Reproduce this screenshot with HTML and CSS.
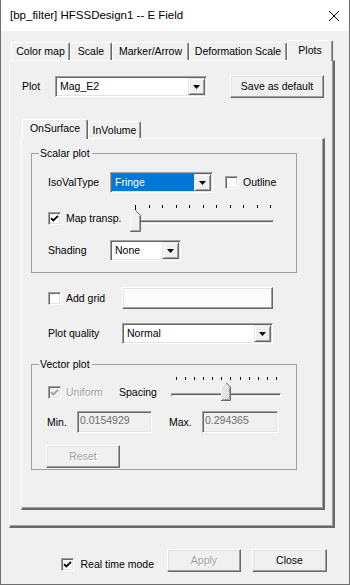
FILE: index.html
```html
<!DOCTYPE html>
<html lang="en">
<head>
    <meta charset="UTF-8">
    <meta name="viewport" content="width=device-width, initial-scale=1.0">
    <title>E Field</title>
    <link rel="stylesheet" href="styles.css">
</head>
<body>
<div class="window">
    <div class="titlebar">
        <span class="title">[bp_filter] HFSSDesign1 -- E Field</span>
        <svg class="close" width="10" height="10" viewBox="0 0 10 10"><path d="M0 0L10 10M10 0L0 10" stroke="#000" stroke-width="1"/></svg>
    </div>
    <div class="client">
        <div class="tabs">
            <div class="tab w-color">Color map</div>
            <div class="tab w-scale">Scale</div>
            <div class="tab w-marker">Marker/Arrow</div>
            <div class="tab w-deform">Deformation Scale</div>
            <div class="tab active w-plots">Plots</div>
        </div>
        <div class="panel">
            <div class="plot-row">
                <span class="plot-label">Plot</span>
                <div class="combo combo-plot">
                    <span class="combo-value">Mag_E2</span>
                    <span class="drop"><svg width="7" height="4" viewBox="0 0 7 4"><path d="M0 0H7L3.5 4Z" fill="#000"/></svg></span>
                </div>
                <button class="btn btn-default">Save as default</button>
            </div>

            <div class="tabs sub-tabs">
                <div class="tab active w-onsurface">OnSurface</div>
                <div class="tab w-involume">InVolume</div>
            </div>
            <div class="panel sub-panel">
                <fieldset class="group group-scalar">
                    <legend>Scalar plot</legend>
                    <div class="row row-iso">
                        <span class="field-label">IsoValType</span>
                        <div class="combo combo-iso">
                            <span class="combo-value selected">Fringe</span>
                            <span class="drop"><svg width="7" height="4" viewBox="0 0 7 4"><path d="M0 0H7L3.5 4Z" fill="#000"/></svg></span>
                        </div>
                        <label class="check outline-check"><span class="box"></span>Outline</label>
                    </div>
                    <div class="row row-transp">
                        <label class="check transp-check">
                            <span class="box"><svg width="9" height="9" viewBox="0 0 9 9"><path d="M1 4.2L3.3 6.5L8 1.8" fill="none" stroke="#000" stroke-width="1.8"/></svg></span>Map transp.
                        </label>
                        <div class="slider slider-transp">
                            <div class="ticks">
                                <i class="tick long"></i><i class="tick"></i><i class="tick"></i><i class="tick"></i>
                                <i class="tick"></i><i class="tick"></i><i class="tick"></i><i class="tick"></i>
                                <i class="tick"></i><i class="tick"></i><i class="tick"></i>
                            </div>
                            <div class="track"></div>
                            <svg class="thumb" width="11" height="22" viewBox="0 0 11 22">
                                <path d="M0.5 5.5L5.5 0.5L10.5 5.5V21.5H0.5Z" fill="#f0f0f0"/>
                                <path d="M0.5 21V5.5L5.2 0.8" fill="none" stroke="#fff"/>
                                <path d="M5.8 0.8L10.5 5.5V21.5H0" fill="none" stroke="#696969"/>
                                <path d="M9.5 6V20.5H1" fill="none" stroke="#a0a0a0"/>
                            </svg>
                        </div>
                    </div>
                    <div class="row row-shading">
                        <span class="field-label">Shading</span>
                        <div class="combo combo-shading">
                            <span class="combo-value">None</span>
                            <span class="drop"><svg width="7" height="4" viewBox="0 0 7 4"><path d="M0 0H7L3.5 4Z" fill="#000"/></svg></span>
                        </div>
                    </div>
                </fieldset>

                <div class="opt-grid">
                    <label class="check"><span class="box"></span>Add grid</label>
                    <button class="btn btn-color"></button>
                    <span>Plot quality</span>
                    <div class="combo combo-quality">
                        <span class="combo-value">Normal</span>
                        <span class="drop"><svg width="7" height="4" viewBox="0 0 7 4"><path d="M0 0H7L3.5 4Z" fill="#000"/></svg></span>
                    </div>
                </div>

                <fieldset class="group group-vector">
                    <legend>Vector plot</legend>
                    <div class="row row-spacing">
                        <label class="check disabled uniform-check">
                            <span class="box"><svg width="9" height="9" viewBox="0 0 9 9"><path d="M1 4.2L3.3 6.5L8 1.8" fill="none" stroke="#a0a0a0" stroke-width="1.8"/></svg></span>Uniform
                        </label>
                        <span class="spacing-label">Spacing</span>
                        <div class="slider slider-spacing">
                            <div class="ticks">
                                <i class="tick"></i><i class="tick"></i><i class="tick"></i><i class="tick"></i>
                                <i class="tick"></i><i class="tick"></i><i class="tick"></i><i class="tick"></i>
                                <i class="tick"></i><i class="tick"></i><i class="tick"></i><i class="tick"></i>
                            </div>
                            <div class="track"></div>
                            <svg class="thumb" width="10" height="19" viewBox="0 0 10 19">
                                <defs>
                                    <pattern id="dither" width="2" height="2" patternUnits="userSpaceOnUse">
                                        <rect width="2" height="2" fill="#fff"/>
                                        <rect width="1" height="1" fill="#c8c8c8"/>
                                        <rect x="1" y="1" width="1" height="1" fill="#c8c8c8"/>
                                    </pattern>
                                </defs>
                                <path d="M0.5 5L5 0.5L9.5 5V18.5H0.5Z" fill="url(#dither)"/>
                                <path d="M0.5 18V5L4.7 0.8" fill="none" stroke="#fff"/>
                                <path d="M5.3 0.8L9.5 5V18.5H0" fill="none" stroke="#696969"/>
                                <path d="M8.5 5.5V17.5H1" fill="none" stroke="#a0a0a0"/>
                            </svg>
                        </div>
                    </div>
                    <div class="row row-range">
                        <span class="min-label">Min.</span>
                        <div class="edit edit-min">0.0154929</div>
                        <span class="max-label">Max.</span>
                        <div class="edit edit-max">0.294365</div>
                    </div>
                    <div class="row row-reset">
                        <button class="btn disabled btn-reset">Reset</button>
                    </div>
                </fieldset>
            </div>
        </div>

        <div class="footer">
            <label class="check realtime-check">
                <span class="box"><svg width="9" height="9" viewBox="0 0 9 9"><path d="M1 4.2L3.3 6.5L8 1.8" fill="none" stroke="#000" stroke-width="1.8"/></svg></span>Real time mode
            </label>
            <button class="btn disabled btn-apply">Apply</button>
            <button class="btn btn-close">Close</button>
        </div>
    </div>
</div>
</body>
</html>
```

FILE: styles.css
```css
* {
    box-sizing: border-box;
}
html, body {
    margin: 0;
    padding: 0;
}
body {
    background: #f0f0f0;
    font-family: "Liberation Sans", Arial, sans-serif;
    font-size: 10.5px;
    line-height: 13px;
    color: #000;
}

/* window frame */
.window {
    width: 350px;
    height: 585px;
    display: flex;
    flex-direction: column;
    background: #f0f0f0;
    border: 1px solid #6e6e6e;
    border-top: none;
}
.titlebar {
    flex: none;
    height: 31px;
    background: #fff;
    display: flex;
    align-items: center;
    justify-content: space-between;
    padding: 0 10px 0 9px;
}
.title {
    font-size: 11.5px;
}
.client {
    flex: 1;
    display: flex;
    flex-direction: column;
    padding: 9px 14px 0 8px;
}

/* tabs */
.tabs {
    display: flex;
    align-items: flex-end;
    padding-left: 2px;
}
.tab {
    height: 18px;
    display: flex;
    align-items: center;
    justify-content: center;
    border: 1px solid;
    border-color: #fff #696969 transparent #fff;
    border-bottom: none;
    border-radius: 2px 2px 0 0;
    box-shadow: inset -1px 0 #a0a0a0;
    background: #f0f0f0;
}
.tab.active {
    position: relative;
    z-index: 1;
    height: 21px;
    margin-bottom: -1px;
    padding-bottom: 2px;
}
.w-color { width: 59px; }
.w-scale { width: 42px; }
.w-marker { width: 77px; }
.w-deform { width: 98px; }
.w-plots { width: 46px; }

.sub-tabs {
    margin-top: 21px;
    padding-left: 1px;
}
.sub-tabs .tab {
    height: 17px;
}
.sub-tabs .tab.active {
    height: 20px;
}
.w-onsurface { width: 66px; }
.w-involume { width: 53px; }

.panel {
    flex: 1;
    display: flex;
    flex-direction: column;
    border: 1px solid;
    border-color: #fff #696969 #696969 #fff;
    border-right-width: 2px;
    border-bottom-width: 2px;
    border-right-color: #696969;
    box-shadow: inset -1px -1px #a0a0a0;
    padding: 14px 8px 16px 11px;
}
.sub-panel {
    display: block;
    padding: 0;
}

/* plot row */
.plot-row {
    display: flex;
    align-items: center;
    height: 23px;
}
.plot-label {
    width: 33px;
    margin-left: 1px;
}
.combo-plot {
    width: 152px;
}
.btn-default {
    width: 94px;
    margin-left: 23px;
}

/* classic controls */
.combo {
    height: 21px;
    display: flex;
    padding: 1px;
    background: #fff;
    border: 1px solid;
    border-color: #a0a0a0 #fff #fff #a0a0a0;
    box-shadow: inset 1px 1px #696969, inset -1px -1px #e3e3e3;
}
.combo-value {
    flex: 1;
    padding-left: 3px;
    line-height: 17px;
    white-space: nowrap;
}
.combo-value.selected {
    background: #0078d7;
    color: #fff;
}
.drop {
    width: 17px;
    height: 17px;
    display: flex;
    align-items: center;
    justify-content: center;
    background: #f0f0f0;
    border: 1px solid;
    border-color: #e3e3e3 #696969 #696969 #e3e3e3;
    box-shadow: inset 1px 1px #fff, inset -1px -1px #a0a0a0;
}
.btn {
    height: 23px;
    padding: 0;
    font: inherit;
    color: #000;
    background: #f0f0f0;
    border: 1px solid;
    border-color: #fff #696969 #696969 #fff;
    box-shadow: inset -1px -1px #a0a0a0, inset 1px 1px #e3e3e3;
}
.btn.disabled {
    color: #a0a0a0;
    text-shadow: 1px 1px #fff;
}
.check {
    display: flex;
    align-items: center;
    gap: 5px;
    white-space: nowrap;
}
.box {
    width: 13px;
    height: 13px;
    flex: none;
    display: flex;
    align-items: center;
    justify-content: center;
    background: #fff;
    border: 1px solid;
    border-color: #a0a0a0 #fff #fff #a0a0a0;
    box-shadow: inset 1px 1px #696969, inset -1px -1px #e3e3e3;
}
.check.disabled {
    color: #a0a0a0;
    text-shadow: 1px 1px #fff;
}
.check.disabled .box {
    background: #f0f0f0;
}
.edit {
    height: 22px;
    padding: 2px 0 0 2px;
    color: #6d6d6d;
    background: #f0f0f0;
    border: 1px solid;
    border-color: #a0a0a0 #fff #fff #a0a0a0;
    box-shadow: inset 1px 1px #696969, inset -1px -1px #e3e3e3;
}

/* group boxes */
.group {
    margin: 8px 0 0 9px;
    width: 266px;
    min-width: 0;
    padding: 0 7px;
    border: 1px solid #a0a0a0;
}
.group legend {
    padding: 0 2px 0 1px;
    line-height: 13px;
}
.row {
    display: flex;
    align-items: center;
    padding-left: 9px;
}
.field-label {
    width: 62px;
}

.group-scalar {
    padding-bottom: 11px;
}
.row-iso {
    margin-top: 12px;
}
.combo-iso {
    width: 103px;
}
.outline-check {
    margin-left: 12px;
}
.row-transp {
    margin-top: 11px;
}
.transp-check {
    width: 82px;
}
.row-shading {
    margin-top: 8px;
}
.combo-shading {
    width: 71px;
}

/* sliders */
.slider {
    position: relative;
}
.ticks {
    display: flex;
    justify-content: space-between;
    align-items: flex-start;
}
.tick {
    width: 1px;
    height: 3px;
    background: #000;
}
.tick.long {
    height: 5px;
}
.track {
    height: 4px;
    background: #e3e3e3;
    border: 1px solid;
    border-color: #a0a0a0 #fff #fff #a0a0a0;
    box-shadow: inset 0 1px #696969;
}
.thumb {
    position: absolute;
}
.slider-transp {
    width: 145px;
    height: 28px;
}
.slider-transp .ticks {
    height: 5px;
    margin: 1px 4px 0 5px;
}
.slider-transp .track {
    margin: 10px 1px 0 5px;
}
.slider-transp .thumb {
    left: 0;
    top: 6px;
}

/* grid + quality */
.opt-grid {
    display: grid;
    grid-template-columns: 74px 151px;
    row-gap: 14px;
    align-items: center;
    margin: 14px 0 0 26px;
}
.btn-color {
    height: 22px;
    background: #fbfbfb;
}
.combo-quality {
    width: 151px;
}

/* vector */
.group-vector {
    margin-top: 14px;
    padding-bottom: 1px;
}
.row-spacing {
    margin-top: 6px;
    align-items: flex-start;
}
.uniform-check {
    width: 71px;
    margin-top: 9px;
}
.spacing-label {
    width: 52px;
    margin-top: 9px;
}
.slider-spacing {
    width: 110px;
    height: 25px;
}
.slider-spacing .ticks {
    height: 3px;
    margin: 0 4px 0 5px;
}
.slider-spacing .track {
    margin-top: 13px;
}
.slider-spacing .thumb {
    left: 50px;
    top: 5px;
}
.row-range {
    margin-top: 9px;
}
.min-label {
    width: 30px;
    margin-left: -1px;
}
.edit-min {
    width: 75px;
}
.max-label {
    width: 33px;
    margin-left: 17px;
}
.edit-max {
    width: 76px;
}
.row-reset {
    margin-top: 12px;
}
.btn-reset {
    width: 74px;
    margin-left: -2px;
}

/* footer */
.footer {
    flex: none;
    height: 56px;
    display: flex;
    align-items: flex-start;
    justify-content: flex-end;
    padding: 21px 8px 0 0;
}
.realtime-check {
    margin-top: 9px;
    gap: 6px;
}
.btn-apply {
    width: 74px;
    margin-left: 13px;
}
.btn-close {
    width: 75px;
    margin-left: 11px;
}
```
